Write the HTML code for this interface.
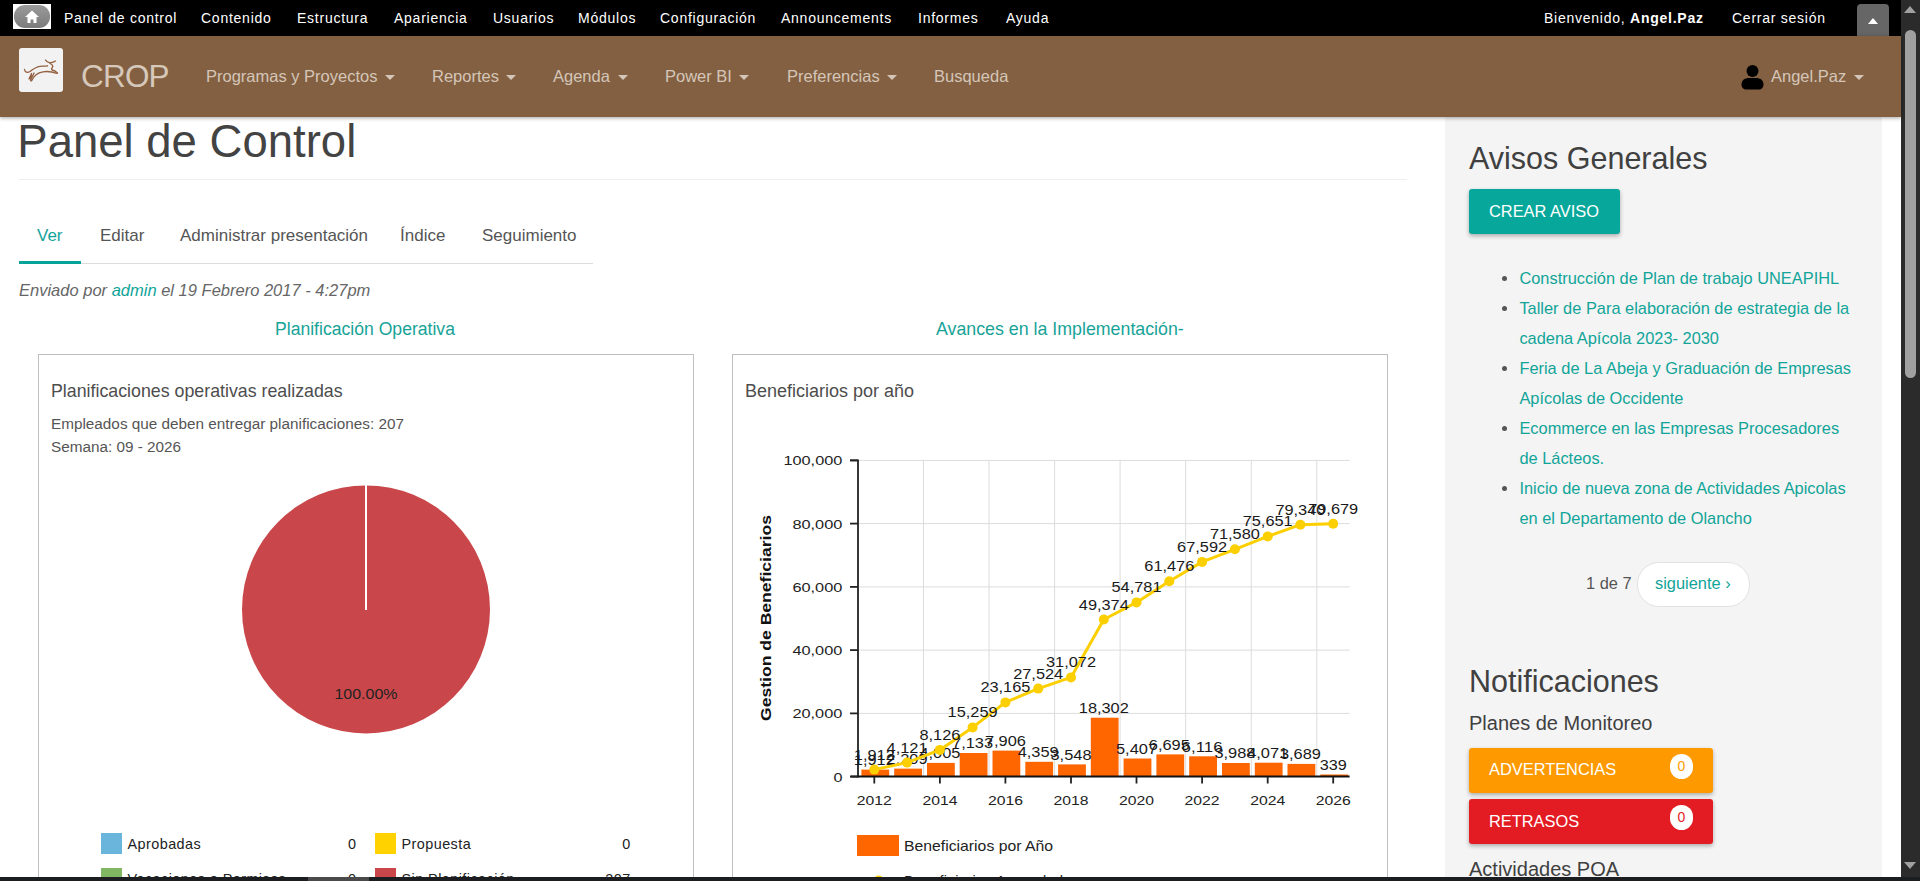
<!DOCTYPE html>
<html><head><meta charset="utf-8">
<style>
*{box-sizing:border-box;margin:0;padding:0}
html,body{width:1920px;height:881px;overflow:hidden;background:#fff;font-family:"Liberation Sans",sans-serif;color:#333}
.a{position:absolute;white-space:nowrap}
#tb{position:absolute;left:0;top:0;width:1901px;height:36px;background:#000}
#tb .t{position:absolute;top:9px;font-size:14px;color:#fff;letter-spacing:0.75px;line-height:18px}
#nb{position:absolute;left:0;top:36px;width:1901px;height:81px;background:#836041;box-shadow:0 1px 4px rgba(0,0,0,.35);z-index:5}
.nv{position:absolute;top:30px;font-size:16.5px;color:#d4c6b9;line-height:20px}
.car{position:absolute;top:39px;width:0;height:0;border-left:5px solid transparent;border-right:5px solid transparent;border-top:5px solid #d4c6b9}
#side{position:absolute;left:1445px;top:117px;width:437px;height:764px;background:#f4f4f4}
#vs{position:absolute;left:1901px;top:0;width:19px;height:881px;background:#2b2b2b}
#hs{position:absolute;left:0;top:877px;width:1920px;height:4px;background:#1c1d20}
.tab{top:226px;font-size:17px;line-height:20px;color:#555}
.sl{font-size:16.4px;line-height:30px;color:#11a499;white-space:nowrap}
.li{position:relative}
.li:before{content:"";position:absolute;left:-17.3px;top:13px;width:5px;height:5px;border-radius:50%;background:#555}
</style></head><body>

<div id="tb">
  <div class="a" style="left:13px;top:4px;width:38px;height:25px;background:#fff"></div>
  <div class="a" style="left:14px;top:5px;width:36px;height:23px;border-radius:11px;background:linear-gradient(#9a9a9a,#7c7c7c)"></div>
  <svg class="a" style="left:24px;top:10px" width="16" height="14" viewBox="0 0 16 14"><path d="M8 0.5 L15 7 L12.5 7 L12.5 13 L9.5 13 L9.5 9.5 L6.5 9.5 L6.5 13 L3.5 13 L3.5 7 L1 7 Z" fill="#fff"/></svg>
  <span class="t" style="left:64px">Panel de control</span>
  <span class="t" style="left:201px">Contenido</span>
  <span class="t" style="left:297px">Estructura</span>
  <span class="t" style="left:394px">Apariencia</span>
  <span class="t" style="left:493px">Usuarios</span>
  <span class="t" style="left:578px">Módulos</span>
  <span class="t" style="left:660px">Configuración</span>
  <span class="t" style="left:781px">Announcements</span>
  <span class="t" style="left:918px">Informes</span>
  <span class="t" style="left:1006px">Ayuda</span>
  <span class="t" style="left:1544px">Bienvenido, <b>Angel.Paz</b></span>
  <span class="t" style="left:1732px">Cerrar sesión</span>
  <div class="a" style="left:1857px;top:4px;width:32px;height:32px;background:#666;border-radius:4px 4px 0 0"></div>
  <div class="a" style="left:1867.5px;top:18.2px;width:0;height:0;border-left:5.7px solid transparent;border-right:5.7px solid transparent;border-bottom:6.5px solid #fff"></div>
</div>

<div id="nb">
  <div class="a" style="left:19px;top:12px;width:44px;height:44px;background:#f2f2f2;border-radius:3px"></div>
  <svg class="a" style="left:19px;top:12px" width="44" height="44" viewBox="0 0 44 44"><g stroke="#946140" stroke-width="1.35" fill="none" stroke-linecap="round" stroke-linejoin="round"><path d="M5.5 21.5 C6 24.5 8.5 25 11 23.5 C14 21 17 18.8 21 18.3 C24 18 26 18.3 28.5 17.8"/><path d="M26.5 12 C27.5 14 29 14.5 31 14.8 C33 14.5 35 14 36.5 13"/><path d="M31 15.5 C33 16.5 35 18 33 20 C31.5 21.5 34 22.5 36 23 L38.5 25"/><path d="M38 25.3 C34 24 29 23 24 23.8 C19 24.5 15 27 12.5 33"/><path d="M10 31 L12.5 25.5 L11.5 32.5 L15 25"/></g></svg>
  <span class="a" style="left:81px;top:21.9px;font-size:31.5px;letter-spacing:-0.8px;color:#d6c8bb;line-height:36px">CROP</span>
  <span class="nv" style="left:206px">Programas y Proyectos</span><div class="car" style="left:385px"></div>
  <span class="nv" style="left:432px">Reportes</span><div class="car" style="left:506px"></div>
  <span class="nv" style="left:553px">Agenda</span><div class="car" style="left:618px"></div>
  <span class="nv" style="left:665px">Power BI</span><div class="car" style="left:739px"></div>
  <span class="nv" style="left:787px">Preferencias</span><div class="car" style="left:887px"></div>
  <span class="nv" style="left:934px">Busqueda</span>
  <svg class="a" style="left:1741px;top:29px" width="23" height="25" viewBox="0 0 23 25"><circle cx="11.5" cy="6" r="6" fill="#000"/><path d="M0.5 19.5 C0.5 15 4 13 8 13 L15 13 C19 13 22.5 15 22.5 19.5 C22.5 22.5 20.5 24.5 17.5 24.5 L5.5 24.5 C2.5 24.5 0.5 22.5 0.5 19.5 Z" fill="#000"/></svg>
  <span class="nv" style="left:1771px">Angel.Paz</span><div class="car" style="left:1854px"></div>
</div>


<!-- main content -->
<span class="a" style="left:17.3px;top:115.7px;font-size:45.5px;line-height:52px;color:#434343">Panel de Control</span>
<div class="a" style="left:19px;top:179px;width:1388px;height:1px;background:#eee"></div>
<div class="a" style="left:19px;top:263px;width:574px;height:1px;background:#dcdcdc"></div>
<div class="a" style="left:19px;top:261px;width:62px;height:3px;background:#06a498"></div>
<span class="a tab" style="left:37px;color:#11a499">Ver</span>
<span class="a tab" style="left:100px">Editar</span>
<span class="a tab" style="left:180px">Administrar presentación</span>
<span class="a tab" style="left:400px">Índice</span>
<span class="a tab" style="left:482px">Seguimiento</span>
<span class="a" style="left:19px;top:281px;font-size:16.5px;line-height:18px;font-style:italic;color:#666">Enviado por <span style="color:#11a499">admin</span> el 19 Febrero 2017 - 4:27pm</span>
<span class="a" style="left:275px;top:319px;font-size:17.6px;line-height:20px;color:#17a398">Planificación Operativa</span>
<span class="a" style="left:936px;top:319px;font-size:17.8px;line-height:20px;color:#17a398">Avances en la Implementación-</span>

<div class="a" style="left:38px;top:354px;width:656px;height:600px;border:1px solid #bfbfbf"></div>
<div class="a" style="left:732px;top:354px;width:656px;height:600px;border:1px solid #bfbfbf"></div>
<span class="a" style="left:51px;top:381px;font-size:17.8px;line-height:20px;color:#4d4d4d">Planificaciones operativas realizadas</span>
<span class="a" style="left:51px;top:415px;font-size:15.3px;line-height:18px;color:#555">Empleados que deben entregar planificaciones: 207</span>
<span class="a" style="left:51px;top:438px;font-size:15.3px;line-height:18px;color:#555">Semana: 09 - 2026</span>
<span class="a" style="left:745px;top:381px;font-size:18px;line-height:20px;color:#4d4d4d">Beneficiarios por año</span>
<!--CHART-->
<svg class="a" style="left:0;top:0" width="1440" height="881" viewBox="0 0 1440 881">
<circle cx="366" cy="609.4" r="124" fill="#c9474a"/>
<rect x="365" y="485" width="2" height="125" fill="#fff"/>
<text x="366" y="698.8" text-anchor="middle" font-size="14.3" fill="#222" textLength="63" lengthAdjust="spacingAndGlyphs">100.00%</text>
<rect x="101" y="833" width="21" height="21" fill="#69b5dc"/>
<text x="127.5" y="849" font-size="14.4" fill="#222" letter-spacing="0.45">Aprobadas</text>
<text x="356.5" y="849" font-size="14.4" fill="#222" text-anchor="end" letter-spacing="0.45">0</text>
<rect x="375" y="833" width="21" height="21" fill="#ffd200"/>
<text x="401.5" y="849" font-size="14.4" fill="#222" letter-spacing="0.45">Propuesta</text>
<text x="630.6" y="849" font-size="14.4" fill="#222" text-anchor="end" letter-spacing="0.45">0</text>
<rect x="101" y="868" width="21" height="21" fill="#81b662"/>
<text x="127.5" y="884" font-size="14.4" fill="#222" letter-spacing="0.45">Vacaciones o Permisos</text>
<text x="356.5" y="884" font-size="14.4" fill="#222" text-anchor="end" letter-spacing="0.45">0</text>
<rect x="375" y="868" width="21" height="21" fill="#c9474a"/>
<text x="401.5" y="884" font-size="14.4" fill="#222" letter-spacing="0.45">Sin Planificación</text>
<text x="630.6" y="884" font-size="14.4" fill="#222" text-anchor="end" letter-spacing="0.45">207</text>
<line x1="858" y1="713.4" x2="1349.6" y2="713.4" stroke="#dcdcdc" stroke-width="1"/>
<line x1="858" y1="650.1" x2="1349.6" y2="650.1" stroke="#dcdcdc" stroke-width="1"/>
<line x1="858" y1="586.9" x2="1349.6" y2="586.9" stroke="#dcdcdc" stroke-width="1"/>
<line x1="858" y1="523.6" x2="1349.6" y2="523.6" stroke="#dcdcdc" stroke-width="1"/>
<line x1="858" y1="460.4" x2="1349.6" y2="460.4" stroke="#dcdcdc" stroke-width="1"/>
<line x1="923.5" y1="460.4" x2="923.5" y2="776.6" stroke="#dcdcdc" stroke-width="1"/>
<line x1="989.0" y1="460.4" x2="989.0" y2="776.6" stroke="#dcdcdc" stroke-width="1"/>
<line x1="1054.6" y1="460.4" x2="1054.6" y2="776.6" stroke="#dcdcdc" stroke-width="1"/>
<line x1="1120.1" y1="460.4" x2="1120.1" y2="776.6" stroke="#dcdcdc" stroke-width="1"/>
<line x1="1185.7" y1="460.4" x2="1185.7" y2="776.6" stroke="#dcdcdc" stroke-width="1"/>
<line x1="1251.3" y1="460.4" x2="1251.3" y2="776.6" stroke="#dcdcdc" stroke-width="1"/>
<line x1="1316.8" y1="460.4" x2="1316.8" y2="776.6" stroke="#dcdcdc" stroke-width="1"/>
<rect x="861.4" y="769.6" width="27.8" height="7.0" fill="#ff6600"/>
<rect x="894.2" y="768.6" width="27.8" height="8.0" fill="#ff6600"/>
<rect x="927.0" y="762.9" width="27.8" height="13.7" fill="#ff6600"/>
<rect x="959.7" y="753.0" width="27.8" height="23.6" fill="#ff6600"/>
<rect x="992.5" y="750.6" width="27.8" height="26.0" fill="#ff6600"/>
<rect x="1025.3" y="761.8" width="27.8" height="14.8" fill="#ff6600"/>
<rect x="1058.1" y="764.4" width="27.8" height="12.2" fill="#ff6600"/>
<rect x="1090.8" y="717.7" width="27.8" height="58.9" fill="#ff6600"/>
<rect x="1123.6" y="758.5" width="27.8" height="18.1" fill="#ff6600"/>
<rect x="1156.4" y="754.4" width="27.8" height="22.2" fill="#ff6600"/>
<rect x="1189.2" y="756.3" width="27.8" height="20.3" fill="#ff6600"/>
<rect x="1222.0" y="763.0" width="27.8" height="13.6" fill="#ff6600"/>
<rect x="1254.8" y="762.7" width="27.8" height="13.9" fill="#ff6600"/>
<rect x="1287.5" y="763.9" width="27.8" height="12.7" fill="#ff6600"/>
<rect x="1320.3" y="774.5" width="27.8" height="2.1" fill="#ff6600"/>
<path d="M850 460.4 H858 V777.5" stroke="#222" stroke-width="1.8" fill="none"/>
<line x1="850.5" y1="776.6" x2="1349.6" y2="776.6" stroke="#111" stroke-width="2"/>
<line x1="850" y1="776.6" x2="858" y2="776.6" stroke="#222" stroke-width="1.8"/>
<text x="842.4" y="781.6" text-anchor="end" font-size="13.2" fill="#222" textLength="9.0" lengthAdjust="spacingAndGlyphs">0</text>
<line x1="850" y1="713.4" x2="858" y2="713.4" stroke="#222" stroke-width="1.8"/>
<text x="842.4" y="718.4" text-anchor="end" font-size="13.2" fill="#222" textLength="50.0" lengthAdjust="spacingAndGlyphs">20,000</text>
<line x1="850" y1="650.1" x2="858" y2="650.1" stroke="#222" stroke-width="1.8"/>
<text x="842.4" y="655.1" text-anchor="end" font-size="13.2" fill="#222" textLength="50.0" lengthAdjust="spacingAndGlyphs">40,000</text>
<line x1="850" y1="586.9" x2="858" y2="586.9" stroke="#222" stroke-width="1.8"/>
<text x="842.4" y="591.9" text-anchor="end" font-size="13.2" fill="#222" textLength="50.0" lengthAdjust="spacingAndGlyphs">60,000</text>
<line x1="850" y1="523.6" x2="858" y2="523.6" stroke="#222" stroke-width="1.8"/>
<text x="842.4" y="528.6" text-anchor="end" font-size="13.2" fill="#222" textLength="50.0" lengthAdjust="spacingAndGlyphs">80,000</text>
<line x1="850" y1="460.4" x2="858" y2="460.4" stroke="#222" stroke-width="1.8"/>
<text x="842.4" y="465.4" text-anchor="end" font-size="13.2" fill="#222" textLength="59.0" lengthAdjust="spacingAndGlyphs">100,000</text>
<line x1="874.3" y1="777" x2="874.3" y2="783.5" stroke="#222" stroke-width="1.8"/>
<text x="874.3" y="804.9" text-anchor="middle" font-size="13.6" fill="#222" textLength="35" lengthAdjust="spacingAndGlyphs">2012</text>
<line x1="939.9" y1="777" x2="939.9" y2="783.5" stroke="#222" stroke-width="1.8"/>
<text x="939.9" y="804.9" text-anchor="middle" font-size="13.6" fill="#222" textLength="35" lengthAdjust="spacingAndGlyphs">2014</text>
<line x1="1005.4" y1="777" x2="1005.4" y2="783.5" stroke="#222" stroke-width="1.8"/>
<text x="1005.4" y="804.9" text-anchor="middle" font-size="13.6" fill="#222" textLength="35" lengthAdjust="spacingAndGlyphs">2016</text>
<line x1="1071.0" y1="777" x2="1071.0" y2="783.5" stroke="#222" stroke-width="1.8"/>
<text x="1071.0" y="804.9" text-anchor="middle" font-size="13.6" fill="#222" textLength="35" lengthAdjust="spacingAndGlyphs">2018</text>
<line x1="1136.5" y1="777" x2="1136.5" y2="783.5" stroke="#222" stroke-width="1.8"/>
<text x="1136.5" y="804.9" text-anchor="middle" font-size="13.6" fill="#222" textLength="35" lengthAdjust="spacingAndGlyphs">2020</text>
<line x1="1202.1" y1="777" x2="1202.1" y2="783.5" stroke="#222" stroke-width="1.8"/>
<text x="1202.1" y="804.9" text-anchor="middle" font-size="13.6" fill="#222" textLength="35" lengthAdjust="spacingAndGlyphs">2022</text>
<line x1="1267.7" y1="777" x2="1267.7" y2="783.5" stroke="#222" stroke-width="1.8"/>
<text x="1267.7" y="804.9" text-anchor="middle" font-size="13.6" fill="#222" textLength="35" lengthAdjust="spacingAndGlyphs">2024</text>
<line x1="1333.2" y1="777" x2="1333.2" y2="783.5" stroke="#222" stroke-width="1.8"/>
<text x="1333.2" y="804.9" text-anchor="middle" font-size="13.6" fill="#222" textLength="35" lengthAdjust="spacingAndGlyphs">2026</text>
<text x="874.3" y="765.0" text-anchor="middle" font-size="14.3" fill="#1a1a1a" textLength="41.0" lengthAdjust="spacingAndGlyphs">1,912</text>
<text x="907.1" y="764.0" text-anchor="middle" font-size="14.3" fill="#1a1a1a" textLength="41.0" lengthAdjust="spacingAndGlyphs">2,209</text>
<text x="939.9" y="758.3" text-anchor="middle" font-size="14.3" fill="#1a1a1a" textLength="41.0" lengthAdjust="spacingAndGlyphs">4,005</text>
<text x="972.6" y="748.4" text-anchor="middle" font-size="14.3" fill="#1a1a1a" textLength="41.0" lengthAdjust="spacingAndGlyphs">7,133</text>
<text x="1005.4" y="746.0" text-anchor="middle" font-size="14.3" fill="#1a1a1a" textLength="41.0" lengthAdjust="spacingAndGlyphs">7,906</text>
<text x="1038.2" y="757.2" text-anchor="middle" font-size="14.3" fill="#1a1a1a" textLength="41.0" lengthAdjust="spacingAndGlyphs">4,359</text>
<text x="1071.0" y="759.8" text-anchor="middle" font-size="14.3" fill="#1a1a1a" textLength="41.0" lengthAdjust="spacingAndGlyphs">3,548</text>
<text x="1103.8" y="713.1" text-anchor="middle" font-size="14.3" fill="#1a1a1a" textLength="50.0" lengthAdjust="spacingAndGlyphs">18,302</text>
<text x="1136.5" y="753.9" text-anchor="middle" font-size="14.3" fill="#1a1a1a" textLength="41.0" lengthAdjust="spacingAndGlyphs">5,407</text>
<text x="1169.3" y="749.8" text-anchor="middle" font-size="14.3" fill="#1a1a1a" textLength="41.0" lengthAdjust="spacingAndGlyphs">6,695</text>
<text x="1202.1" y="751.7" text-anchor="middle" font-size="14.3" fill="#1a1a1a" textLength="41.0" lengthAdjust="spacingAndGlyphs">6,116</text>
<text x="1234.9" y="758.4" text-anchor="middle" font-size="14.3" fill="#1a1a1a" textLength="41.0" lengthAdjust="spacingAndGlyphs">3,988</text>
<text x="1267.7" y="758.1" text-anchor="middle" font-size="14.3" fill="#1a1a1a" textLength="41.0" lengthAdjust="spacingAndGlyphs">4,071</text>
<text x="1300.4" y="759.3" text-anchor="middle" font-size="14.3" fill="#1a1a1a" textLength="41.0" lengthAdjust="spacingAndGlyphs">3,689</text>
<text x="1333.2" y="769.9" text-anchor="middle" font-size="14.3" fill="#1a1a1a" textLength="27.0" lengthAdjust="spacingAndGlyphs">339</text>
<polyline points="874.3,769.6 907.1,762.6 939.9,749.9 972.6,727.4 1005.4,702.4 1038.2,688.6 1071.0,677.4 1103.8,619.5 1136.5,602.4 1169.3,581.2 1202.1,561.9 1234.9,549.3 1267.7,536.4 1300.4,524.7 1333.2,523.7" fill="none" stroke="#fccf00" stroke-width="3" stroke-linejoin="round"/>
<circle cx="874.3" cy="769.6" r="5" fill="#fccf00"/>
<circle cx="907.1" cy="762.6" r="5" fill="#fccf00"/>
<circle cx="939.9" cy="749.9" r="5" fill="#fccf00"/>
<circle cx="972.6" cy="727.4" r="5" fill="#fccf00"/>
<circle cx="1005.4" cy="702.4" r="5" fill="#fccf00"/>
<circle cx="1038.2" cy="688.6" r="5" fill="#fccf00"/>
<circle cx="1071.0" cy="677.4" r="5" fill="#fccf00"/>
<circle cx="1103.8" cy="619.5" r="5" fill="#fccf00"/>
<circle cx="1136.5" cy="602.4" r="5" fill="#fccf00"/>
<circle cx="1169.3" cy="581.2" r="5" fill="#fccf00"/>
<circle cx="1202.1" cy="561.9" r="5" fill="#fccf00"/>
<circle cx="1234.9" cy="549.3" r="5" fill="#fccf00"/>
<circle cx="1267.7" cy="536.4" r="5" fill="#fccf00"/>
<circle cx="1300.4" cy="524.7" r="5" fill="#fccf00"/>
<circle cx="1333.2" cy="523.7" r="5" fill="#fccf00"/>
<text x="874.3" y="759.6" text-anchor="middle" font-size="14.3" fill="#1a1a1a" textLength="41.0" lengthAdjust="spacingAndGlyphs">1,912</text>
<text x="907.1" y="752.6" text-anchor="middle" font-size="14.3" fill="#1a1a1a" textLength="41.0" lengthAdjust="spacingAndGlyphs">4,121</text>
<text x="939.9" y="739.9" text-anchor="middle" font-size="14.3" fill="#1a1a1a" textLength="41.0" lengthAdjust="spacingAndGlyphs">8,126</text>
<text x="972.6" y="717.4" text-anchor="middle" font-size="14.3" fill="#1a1a1a" textLength="50.0" lengthAdjust="spacingAndGlyphs">15,259</text>
<text x="1005.4" y="692.4" text-anchor="middle" font-size="14.3" fill="#1a1a1a" textLength="50.0" lengthAdjust="spacingAndGlyphs">23,165</text>
<text x="1038.2" y="678.6" text-anchor="middle" font-size="14.3" fill="#1a1a1a" textLength="50.0" lengthAdjust="spacingAndGlyphs">27,524</text>
<text x="1071.0" y="667.4" text-anchor="middle" font-size="14.3" fill="#1a1a1a" textLength="50.0" lengthAdjust="spacingAndGlyphs">31,072</text>
<text x="1103.8" y="609.5" text-anchor="middle" font-size="14.3" fill="#1a1a1a" textLength="50.0" lengthAdjust="spacingAndGlyphs">49,374</text>
<text x="1136.5" y="592.4" text-anchor="middle" font-size="14.3" fill="#1a1a1a" textLength="50.0" lengthAdjust="spacingAndGlyphs">54,781</text>
<text x="1169.3" y="571.2" text-anchor="middle" font-size="14.3" fill="#1a1a1a" textLength="50.0" lengthAdjust="spacingAndGlyphs">61,476</text>
<text x="1202.1" y="551.9" text-anchor="middle" font-size="14.3" fill="#1a1a1a" textLength="50.0" lengthAdjust="spacingAndGlyphs">67,592</text>
<text x="1234.9" y="539.3" text-anchor="middle" font-size="14.3" fill="#1a1a1a" textLength="50.0" lengthAdjust="spacingAndGlyphs">71,580</text>
<text x="1267.7" y="526.4" text-anchor="middle" font-size="14.3" fill="#1a1a1a" textLength="50.0" lengthAdjust="spacingAndGlyphs">75,651</text>
<text x="1300.4" y="514.7" text-anchor="middle" font-size="14.3" fill="#1a1a1a" textLength="50.0" lengthAdjust="spacingAndGlyphs">79,340</text>
<text x="1333.2" y="513.7" text-anchor="middle" font-size="14.3" fill="#1a1a1a" textLength="50.0" lengthAdjust="spacingAndGlyphs">79,679</text>
<text transform="translate(770.5,618) rotate(-90)" text-anchor="middle" font-size="15" font-weight="bold" fill="#111" textLength="206" lengthAdjust="spacingAndGlyphs">Gestion de Beneficiarios</text>
<rect x="857" y="835" width="42" height="21" fill="#ff6600"/>
<text x="904" y="851.1" font-size="14.4" fill="#222" textLength="149" lengthAdjust="spacingAndGlyphs">Beneficiarios por Año</text>
<line x1="857" y1="881" x2="899" y2="881" stroke="#fccf00" stroke-width="3"/><circle cx="878.6" cy="880.5" r="5" fill="#fccf00"/>
<text x="904" y="886" font-size="14.4" fill="#222" letter-spacing="0.45">Beneficiarios Acumulados</text>
</svg>
<!--/CHART-->
<div id="side">
  <span class="a" style="left:24px;top:22.5px;font-size:30.5px;line-height:36px;color:#404040">Avisos Generales</span>
  <div class="a" style="left:24px;top:72px;width:151px;height:45px;background:#07a89b;border-radius:3px;box-shadow:0 2px 4px rgba(0,0,0,.3)"></div>
  <span class="a" style="left:44px;top:84.5px;font-size:16.4px;line-height:18px;color:#fff">CREAR AVISO</span>
  <div class="a sl" style="left:74.4px;top:146px;width:360px">
    <div class="li">Construcción de Plan de trabajo UNEAPIHL</div>
    <div class="li">Taller de Para elaboración de estrategia de la<br>cadena Apícola 2023- 2030</div>
    <div class="li">Feria de La Abeja y Graduación de Empresas<br>Apícolas de Occidente</div>
    <div class="li">Ecommerce en las Empresas Procesadores<br>de Lácteos.</div>
    <div class="li">Inicio de nueva zona de Actividades Apicolas<br>en el Departamento de Olancho</div>
  </div>
  <span class="a" style="left:141px;top:456px;font-size:16.4px;line-height:20px;color:#555">1 de 7</span>
  <div class="a" style="left:192px;top:445px;width:113px;height:45px;border:1px solid #e2e2e2;border-radius:22px;background:#fff"></div>
  <span class="a" style="left:210px;top:456px;font-size:16.4px;line-height:20px;color:#11a499">siguiente ›</span>
  <span class="a" style="left:24px;top:545.5px;font-size:30.5px;line-height:36px;color:#404040">Notificaciones</span>
  <span class="a" style="left:24px;top:593.5px;font-size:20px;line-height:24px;color:#404040">Planes de Monitoreo</span>
  <div class="a" style="left:24px;top:631px;width:244px;height:45px;background:#fe9a00;border-radius:3px;box-shadow:0 2px 4px rgba(0,0,0,.3)"></div>
  <span class="a" style="left:44px;top:642.5px;font-size:16.4px;line-height:18px;color:#fff">ADVERTENCIAS</span>
  <div class="a" style="left:225px;top:637px;width:23px;height:25px;border-radius:12px;background:#fff"></div>
  <span class="a" style="left:225px;top:640.5px;width:23px;text-align:center;font-size:14px;line-height:16px;color:#fe9a00">0</span>
  <div class="a" style="left:24px;top:682px;width:244px;height:45px;background:#e31b23;border-radius:3px;box-shadow:0 2px 4px rgba(0,0,0,.3)"></div>
  <span class="a" style="left:44px;top:695px;font-size:16.4px;line-height:18px;color:#fff">RETRASOS</span>
  <div class="a" style="left:225px;top:688px;width:23px;height:25px;border-radius:12px;background:#fff"></div>
  <span class="a" style="left:225px;top:691.5px;width:23px;text-align:center;font-size:14px;line-height:16px;color:#e31b23">0</span>
  <span class="a" style="left:24px;top:740px;font-size:20px;line-height:24px;color:#404040">Actividades POA</span>
</div>
<div id="vs">
  <div class="a" style="left:4px;top:30px;width:11px;height:348px;border-radius:6px;background:#a0a0a0"></div>
  <div class="a" style="left:3px;top:6px;width:0;height:0;border-left:6.7px solid transparent;border-right:6.7px solid transparent;border-bottom:7px solid #a0a0a0"></div>
  <div class="a" style="left:3px;top:862px;width:0;height:0;border-left:6.7px solid transparent;border-right:6.7px solid transparent;border-top:7px solid #a0a0a0"></div>
</div>
<div id="hs"><div class="a" style="left:308px;top:0;width:61px;height:4px;background:#4a4a4a"></div></div>
</body></html>
